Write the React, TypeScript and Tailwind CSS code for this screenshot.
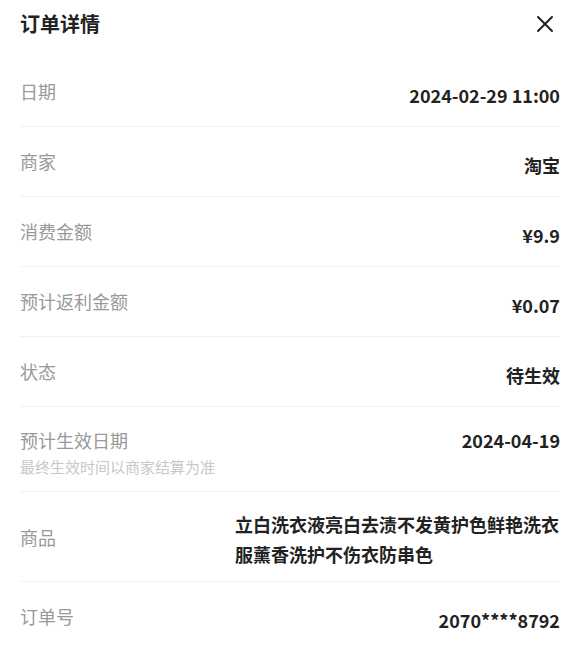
import React from 'react';

const rows: { label: string; value: string }[] = [
  { label: '日期', value: '2024-02-29 11:00' },
  { label: '商家', value: '淘宝' },
  { label: '消费金额', value: '¥9.9' },
  { label: '预计返利金额', value: '¥0.07' },
  { label: '状态', value: '待生效' },
];

const font = { fontFamily: '"Noto Sans CJK SC", "Noto Sans", sans-serif' };

export default function App() {
  return (
    <div className="w-[586px] h-[649px] bg-white overflow-hidden" style={font}>
      {/* Header */}
      <div className="h-[57px] pl-[20px] pr-[31px] flex items-start justify-between">
        <h1 className="mt-[9px] text-[20px] leading-[30px] font-bold text-[#222]">订单详情</h1>
        <button className="mt-[14px] w-[20px] h-[20px] flex items-center justify-center text-[#222]">
          <svg width="18" height="18" viewBox="0 0 18 18" fill="none" stroke="currentColor" strokeWidth="2" strokeLinecap="round">
            <path d="M2 2L16 16M16 2L2 16" />
          </svg>
        </button>
      </div>

      <div className="pl-[20px] pr-[26px]">
        {rows.map((r) => (
          <div key={r.label} className="h-[70px] flex items-center justify-between border-b border-[#f2f2f2]">
            <span className="-mt-[2px] text-[18px] leading-[26px] text-[#999]">{r.label}</span>
            <span className="mt-[6px] text-[18px] leading-[26px] font-bold text-[#222]">{r.value}</span>
          </div>
        ))}

        <div className="h-[85px] pt-[20px] flex items-start justify-between border-b border-[#f2f2f2]">
          <div className="flex flex-col">
            <span className="text-[18px] leading-[26px] text-[#999]">预计生效日期</span>
            <span className="mt-[3px] text-[15px] leading-[22px] text-[#c8c8c8]">最终生效时间以商家结算为准</span>
          </div>
          <span className="text-[18px] leading-[26px] font-bold text-[#222]">2024-04-19</span>
        </div>

        <div className="h-[90px] flex items-center justify-between border-b border-[#f2f2f2]">
          <span className="text-[18px] leading-[26px] text-[#999]">商品</span>
          <span className="mt-[4px] w-[325px] text-[18px] leading-[30px] font-bold text-[#222]">
            立白洗衣液亮白去渍不发黄护色鲜艳洗衣服薰香洗护不伤衣防串色
          </span>
        </div>

        <div className="h-[70px] flex items-center justify-between">
          <span className="-mt-[2px] text-[18px] leading-[26px] text-[#999]">订单号</span>
          <span className="mt-[6px] text-[18px] leading-[26px] font-bold text-[#222]">2070****8792</span>
        </div>
      </div>
    </div>
  );
}
